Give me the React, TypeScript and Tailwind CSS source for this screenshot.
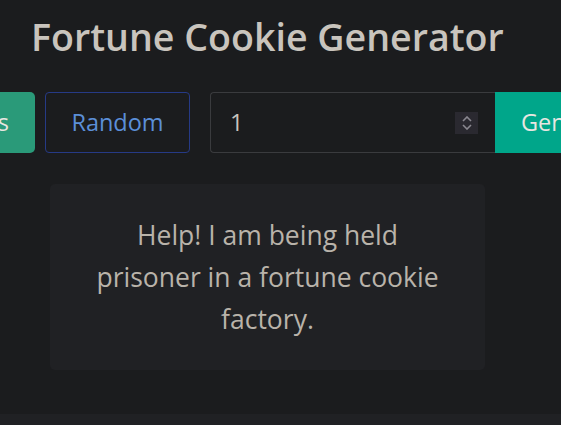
export default function App() {
  return (
    <div
      className="w-[561px] h-[425px] overflow-hidden bg-[#1b1c1e] flex flex-col"
      style={{ fontFamily: '"Open Sans", "Noto Sans", sans-serif' }}
    >
      <div className="flex-1">
        <h1 className="pl-[31px] pt-[12px] text-[37.6px] leading-[50px] font-semibold text-[#c9c4bd] whitespace-nowrap">
          Fortune Cookie Generator
        </h1>

        {/* Controls row */}
        <div className="mt-[30px] flex items-stretch h-[61px] ml-[-120px] w-max">
          <button className="w-[155px] rounded-[5px] bg-[#2a9a79] text-[#e8e6e1] text-[23.5px] flex items-center justify-end pr-[26px]">
            Fortunes
          </button>
          <button className="ml-[10px] w-[145px] rounded-[4px] border border-[#263a86] text-[#5b8fd8] text-[23.5px] flex items-center justify-center">
            Random
          </button>
          <div className="ml-[20px] w-[285px] rounded-l-[4px] border border-[#3a3b3e] border-r-0 flex items-center pl-[19px] pr-[17px]">
            <span className="flex-1 text-[23.5px] text-[#c9c4bd]">1</span>
            <span className="w-[23px] h-[22px] bg-[#2a2930] flex flex-col items-center justify-center gap-[2px]">
              <svg width="10" height="6" viewBox="0 0 10 6" fill="none">
                <path d="M1 5 L5 1 L9 5" stroke="#8a8890" strokeWidth="1.6" />
              </svg>
              <svg width="10" height="6" viewBox="0 0 10 6" fill="none">
                <path d="M1 1 L5 5 L9 1" stroke="#8a8890" strokeWidth="1.6" />
              </svg>
            </span>
          </div>
          <button className="w-[150px] bg-[#00a68a] text-[#e8e6e1] text-[23.5px] flex items-center pl-[26px] rounded-r-[4px]">
            Generate
          </button>
        </div>

        {/* Fortune card */}
        <div className="mt-[31px] ml-[50px] w-[435px] h-[186px] rounded-[5px] bg-[#202124] flex items-center justify-center text-center">
          <p className="text-[26.5px] leading-[42px] text-[#b9b3aa]">
            Help! I am being held
            <br />
            prisoner in a fortune cookie
            <br />
            factory.
          </p>
        </div>
      </div>
      <div className="h-[11px] bg-[#202124]" />
    </div>
  );
}
